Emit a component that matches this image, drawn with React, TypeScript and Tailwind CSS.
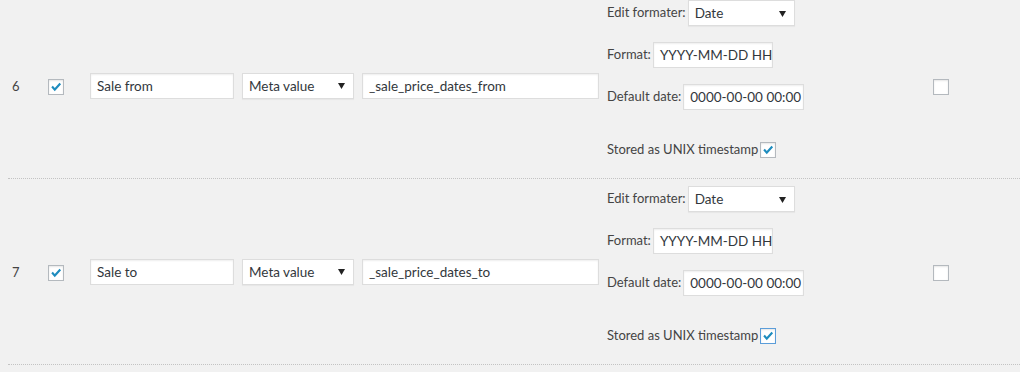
import React from "react";

const font = { fontFamily: 'Lato, "Noto Sans", sans-serif' };

const Check = ({ checked, focused }: { checked?: boolean; focused?: boolean }) => (
  <span
    className={`inline-flex h-4 w-4 shrink-0 items-center justify-center bg-white shadow-[inset_0_1px_2px_rgba(0,0,0,0.1)] border ${
      focused ? "border-[#5b9dd9] shadow-[0_0_2px_rgba(30,140,190,0.8)]" : "border-[#b4b9be]"
    }`}
  >
    {checked && (
      <svg width="14" height="14" viewBox="0 0 16 16">
        <path d="M2.6 8.2 L4.4 6.6 L6.6 9 L12 3.2 L13.8 4.8 L6.6 12.8 Z" fill="#1e8cbe" />
      </svg>
    )}
  </span>
);

const Input = ({ value, w }: { value: string; w: string }) => (
  <div
    className={`${w} h-[26px] shrink-0 overflow-hidden whitespace-nowrap border border-[#dddddd] bg-white pl-[6px] text-[13.5px] leading-[24px] text-[#32373c] shadow-[inset_0_1px_2px_rgba(0,0,0,0.07)]`}
  >
    {value}
  </div>
);

const Select = ({ value, w }: { value: string; w: string }) => (
  <div
    className={`${w} flex h-[26px] shrink-0 items-center justify-between border border-[#dddddd] bg-white pl-[6px] pr-[8px] text-[13.5px] text-[#32373c] shadow-[0_1px_1px_rgba(0,0,0,0.04)]`}
  >
    <span className="leading-[24px]">{value}</span>
    <svg width="7" height="7" viewBox="0 0 7 7">
      <path d="M0 1 L7 1 L3.5 7 Z" fill="#222" />
    </svg>
  </div>
);

const Row = ({ n, name, field, focused }: { n: string; name: string; field: string; focused?: boolean }) => (
  <div className="flex items-center border-b border-dotted border-[#c3c3c3]">
    <div className="w-[36px] pl-1 pt-[2px] text-[13px] text-[#444]">{n}</div>
    <div className="flex w-[42px] pl-1 pt-[3px]">
      <Check checked />
    </div>
    <div className="px-1">
      <Input value={name} w="w-[144px]" />
    </div>
    <div className="px-1">
      <Select value="Meta value" w="w-[112px]" />
    </div>
    <div className="px-1">
      <Input value={field} w="w-[237px]" />
    </div>
    <div className="flex w-[326px] flex-col gap-4 pb-[15px] pl-1 pt-[7px] text-[13px] text-[#444]">
      <div className="flex items-center gap-[2px]">
        <span>Edit formater:</span>
        <Select value="Date" w="w-[107px]" />
      </div>
      <div className="flex items-center gap-[2px]">
        <span>Format:</span>
        <Input value="YYYY-MM-DD HH:mm" w="w-[120px]" />
      </div>
      <div className="flex items-center gap-[2px]">
        <span>Default date:</span>
        <Input value="0000-00-00 00:00" w="w-[121px]" />
      </div>
      <div className="mt-[11px] flex h-[26px] items-center gap-[2px]">
        <span>Stored as UNIX timestamp</span>
        <Check checked focused={focused} />
      </div>
    </div>
    <div className="flex pl-1 pt-[3px]">
      <Check />
    </div>
  </div>
);

export default function App() {
  return (
    <div className="h-[372px] w-[1020px] overflow-hidden bg-[#f1f1f1]" style={font}>
      <div className="-mt-[7px] pl-2">
        <Row n="6" name="Sale from" field="_sale_price_dates_from" />
        <Row n="7" name="Sale to" field="_sale_price_dates_to" focused />
        <Row n="8" name="Tax status" field="_tax_status" />
      </div>
    </div>
  );
}
